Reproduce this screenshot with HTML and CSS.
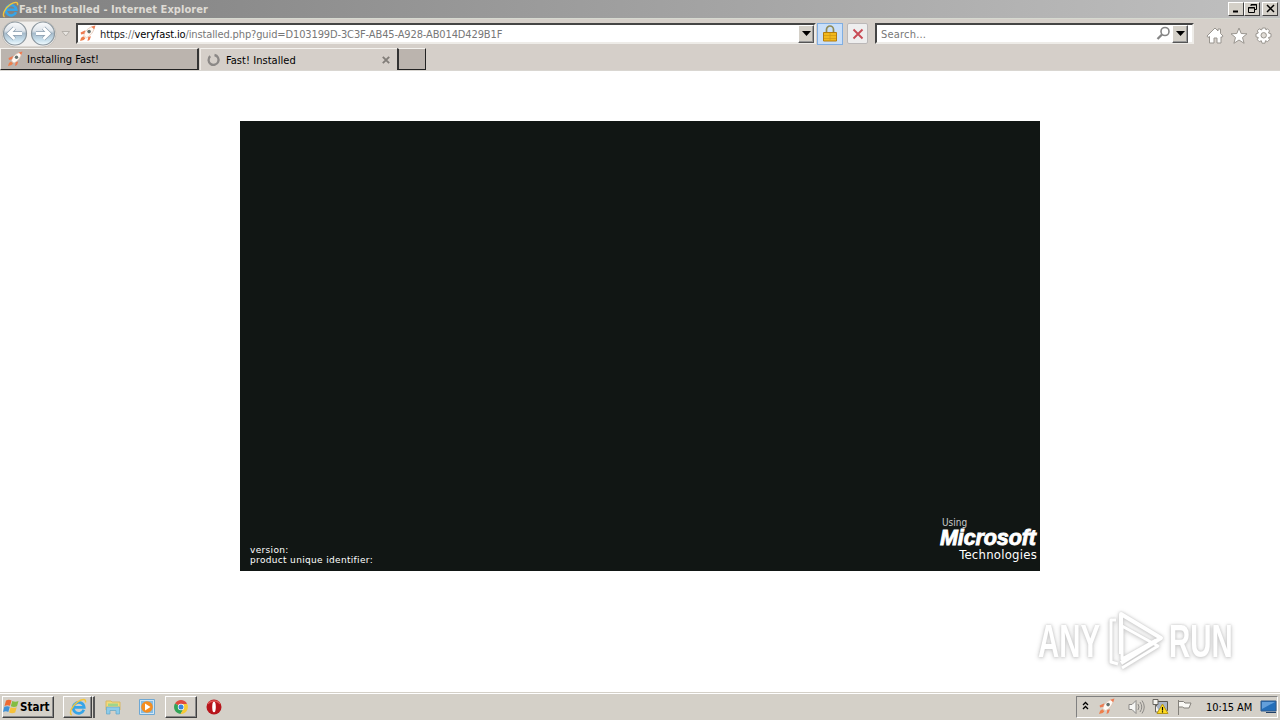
FILE: index.html
```html
<!DOCTYPE html>
<html lang="en">

<head>
    <meta charset="UTF-8">
    <title>Fast! Installed</title>
    <link rel="stylesheet" href="styles.css">
</head>

<body>
    <svg class="defs" width="0" height="0">
        <symbol id="ie" viewBox="0 0 16 16">
            <path d="M13.200 10.500A4.900 4.900 0 1 1 13.500 8.300H5" fill="none" stroke="#36a5e8" stroke-width="2.400" />
            <path d="M2.500 15C-.5 14 2.500 6.500 8 3.200C12 .7 15.500 .5 14.600 4" fill="none" stroke="#f2c53c" stroke-width="1.300" />
        </symbol>
        <symbol id="rocket" viewBox="0 0 16 16">
            <path d="M4.500 10C5 6 9 2 14.500 1C14.500 6 10.500 10.500 7 12z" fill="#fffaf5" stroke="#dfc0ad" stroke-width=".7" />
            <path d="M11.500 1.600L15.500 .5L14.300 4zM6 5L1.500 7L2 9L5 8.300zM8.700 11.300L8 15L10 14L11.300 10.500z" fill="#ee7a50" />
            <path d="M1 15L2 12L4 10.500L6 12.500L4.500 14z" fill="#ee7f4b" />
            <circle cx="9.500" cy="6.200" r="1.700" fill="#64706c" />
        </symbol>
    </svg>

    <div class="window">
        <div class="titlebar">
            <svg class="logo" width="17" height="17"><use href="#ie" /></svg>
            <span class="title">Fast! Installed - Internet Explorer</span>
            <div class="controls">
                <span class="win-btn"><svg width="13" height="11"><path d="M3 8.500h5" stroke="#000" stroke-width="2" /></svg></span>
                <span class="win-btn"><svg width="13" height="11" fill="none" stroke="#000"><path d="M5 3V1.500h5.500v5H9M5 2h6M2.500 4.500h6v5h-6zM2 5h7" /></svg></span>
                <span class="win-btn close"><svg width="13" height="11"><path d="M3 2l7 7M10 2l-7 7" stroke="#000" stroke-width="1.500" /></svg></span>
            </div>
        </div>

        <div class="toolbar">
            <svg class="nav" width="74" height="30" viewBox="0 0 74 30">
                <defs>
                    <linearGradient id="ball" x1="0" y1="0" x2="0" y2="1">
                        <stop offset="0" stop-color="#fafbfc" />
                        <stop offset=".38" stop-color="#dfe5eb" />
                        <stop offset=".5" stop-color="#a6bbcb" />
                        <stop offset=".78" stop-color="#c8dfec" />
                        <stop offset="1" stop-color="#f3fcff" />
                    </linearGradient>
                </defs>
                <path d="M15 2h28a13 13 0 0 1 0 26h-28a13 13 0 0 1 0-26" fill="#f1efed" stroke="#c4bfb8" />
                <circle cx="15" cy="14.500" r="11.500" fill="url(#ball)" stroke="#8c979f" stroke-width="1.200" />
                <circle cx="43" cy="14.500" r="11.500" fill="url(#ball)" stroke="#8c979f" stroke-width="1.200" />
                <path d="M14.500 9L9 14.500l5.500 5.500M10 14.500h12M43.500 9l5.500 5.500l-5.500 5.500M48 14.500H36" fill="none" stroke="#8ea0b1" stroke-width="4.300" />
                <path d="M14.500 9L9 14.500l5.500 5.500M10 14.500h12M43.500 9l5.500 5.500l-5.500 5.500M48 14.500H36" fill="none" stroke="#fff" stroke-width="3" />
                <path d="M62 12.500h7.500L65.800 17z" fill="#e8e5e1" stroke="#aaa59e" stroke-width=".8" />
            </svg>
            <div class="field address">
                <svg class="favicon" width="17" height="17"><use href="#rocket" /></svg>
                <span class="url"><span class="scheme">https</span>://<b>veryfast.io</b>/installed.php?guid=D103199D-3C3F-AB45-A928-AB014D429B1F</span>
                <span class="drop"><svg width="9" height="5"><path d="M0 0h9L4.500 5z" /></svg></span>
            </div>
            <span class="lock">
                <svg width="14" height="17" viewBox="0 0 14 17">
                    <path d="M3.500 8V4.500a3.500 3.500 0 0 1 7 0V8" fill="none" stroke="#8f8a55" stroke-width="1.700" />
                    <path d="M.5 7.500h13v8.500h-13z" fill="#f2b91d" stroke="#b47c0d" />
                    <path d="M1 10.500h12M1 13.500h12M7 8v8" stroke="#d29a18" stroke-width=".8" />
                </svg>
            </span>
            <span class="stop">
                <svg width="12" height="12"><path d="M1.500 1.500l9 9M10.500 1.500l-9 9" stroke="#c84b55" stroke-width="1.900" /></svg>
            </span>
            <div class="field search">
                <span class="hint">Search...</span>
                <svg class="glass" width="15" height="15"><circle cx="9" cy="5.500" r="4" fill="none" stroke="#858585" stroke-width="1.600" /><path d="M6 8.500L1.500 13" stroke="#858585" stroke-width="2.300" /></svg>
                <span class="drop"><svg width="9" height="5"><path d="M0 0h9L4.500 5z" /></svg></span>
            </div>
            <svg class="tools" width="72" height="20" viewBox="0 0 72 20" fill="#fff" stroke="#99958f">
                <path d="M1 10L9 2l3 3V3h2.500v4.500L17 10l-1 1.500l-1-.7V17h-4v-5H8v5H3.500v-6.500L2 11.500z" />
                <path d="M33 2l2.200 5.500l5.800.3l-4.500 3.700l1.600 5.800L33 14l-5.100 3.300l1.600-5.800L25 7.800l5.800-.3z" />
                <path d="M56.500 2h3l.5 2l1.500-1.200l2 2L62.500 7l2.500.8v3l-2.500.7l1 2.200l-2 2l-2-1l-.5 2.500h-3l-.7-2.500l-2 1l-2-2l1-2.200L50 10.800v-3l2.300-.8l-1-2.200l2-2L55.500 4z" />
                <circle cx="57.700" cy="9.300" r="2.700" fill="#e0dcd6" />
            </svg>
        </div>

        <div class="tabs">
            <div class="tab idle">
                <svg width="16" height="16"><use href="#rocket" /></svg>
                <span class="tab-one">Installing Fast!</span>
            </div>
            <div class="tab active">
                <svg class="spinner" width="14" height="14"><path d="M3.200 3.200A5 5 0 1 0 7.500 2" fill="none" stroke="#8b8886" stroke-width="2.300" /></svg>
                <span class="tab-two">Fast! Installed</span>
                <svg class="tab-close" width="8" height="8"><path d="M.8.8l6.400 6.400M7.200.8L.8 7.200" stroke="#827e79" stroke-width="1.900" /></svg>
            </div>
            <div class="tab new-tab"></div>
        </div>

        <div class="page">
            <div class="player">
                <div class="info">
                    <span class="version">version:</span>
                    <span class="identifier">product unique identifier:</span>
                </div>
                <div class="brand">
                    <span class="using">Using</span>
                    <span class="microsoft">Microsoft</span>
                    <span class="technologies">Technologies</span>
                </div>
            </div>
            <div class="watermark">
                <span class="any">ANY</span>
                <svg width="60" height="66" viewBox="0 0 60 66" fill="none" stroke="#fff" stroke-width="4" stroke-linejoin="round">
                    <path d="M17 46V6l40 24L17 55" />
                    <path d="M18 18l36 20L18 60M12 12H7v42l7 2M18 19v32l34-19" stroke-width="3" />
                </svg>
                <span class="run">RUN</span>
            </div>
        </div>

        <div class="taskbar">
            <div class="start">
                <svg width="17" height="17" viewBox="0 0 17 17">
                    <path d="M3 2.500q3-1.500 5.500 0L7 7.800Q4.500 6.500 1.500 8z" fill="#ee6a32" />
                    <path d="M9.300 3q3 1.500 6.200 0L14 8.300q-3 1.500-6.200 0z" fill="#83bd42" />
                    <path d="M1.300 8.800q3-1.300 5.500 0L5.300 14Q3 12.700 0 14z" fill="#3f91d7" />
                    <path d="M7.600 9.200q3 1.300 6.100 0L12.200 14.500q-3 1.500-6.100 0z" fill="#f6c13a" />
                </svg>
                <span>Start</span>
            </div>
            <div class="task ie-task"><svg width="18" height="18"><use href="#ie" /></svg></div>
            <div class="stack"></div>
            <svg class="launch explorer" width="16" height="16" viewBox="0 0 16 16">
                <path d="M1 2h5l1 1h8v8H1z" fill="#f3d978" stroke="#d7b864" />
                <path d="M3 4.500h10V7H3z" fill="#9ed58c" />
                <path d="M1.500 15V8h13v7H11v-3.500H5V15z" fill="#8dcbea" stroke="#62a8ca" stroke-width=".7" />
            </svg>
            <svg class="launch media" width="16" height="16" viewBox="0 0 16 16">
                <path d="M.5.5h15v15H.5z" fill="#cfe5f5" stroke="#6ea8d4" />
                <path d="M2 2h12v12H2z" fill="#83bce5" />
                <circle cx="8" cy="8" r="5.800" fill="#f48d20" />
                <path d="M6 4.500v7L11.500 8z" fill="#fff" />
            </svg>
            <div class="task chrome-task">
                <svg width="14" height="14" viewBox="0 0 14 14">
                    <path d="M7 7L1 3.500A7 7 0 0 1 13 3.500z" fill="#df4b3e" />
                    <path d="M7 7L1 3.500A7 7 0 0 0 6.500 14L10 8z" fill="#32a457" />
                    <path d="M7 4h6.200A7 7 0 0 1 6.500 14L10 8z" fill="#f7cb35" />
                    <circle cx="7" cy="7" r="3.200" fill="#fff" />
                    <circle cx="7" cy="7" r="2.500" fill="#3985db" />
                </svg>
            </div>
            <svg class="launch opera" width="16" height="16" viewBox="0 0 16 16">
                <circle cx="8" cy="8" r="7.500" fill="#b7151b" />
                <path d="M2 5a6.500 5 0 0 1 12 0" fill="none" stroke="#de5654" stroke-width="1.500" />
                <ellipse cx="8" cy="8" rx="1.800" ry="5.300" fill="#fff" />
            </svg>

            <div class="tray">
                <svg class="chevron" width="7" height="9" fill="none" stroke="#000" stroke-width="1.300"><path d="M1 4l2.500-2.500L6 4M1 8l2.500-2.500L6 8" /></svg>
                <svg class="tray-rocket" width="17" height="17"><use href="#rocket" /></svg>
                <svg class="sound" width="17" height="16" fill="none" stroke="#8b8986">
                    <path d="M1 5.500h3L8 1.500v13l-4-4H1z" fill="#f7f7f5" />
                    <path d="M10 5q2 3 0 6M12 3q3.500 5 0 10M14 1.500q4.500 6.500 0 13" />
                </svg>
                <svg class="network" width="17" height="17" viewBox="0 0 17 17">
                    <path d="M4.500 3.500h11v9h-11z" fill="#a9b4c4" stroke="#59554a" />
                    <path d="M1 1.500h5v5H1zM3.500 6.500V14h4" fill="#f5f4ef" stroke="#696660" />
                    <path d="M10.500 6L16 15.500H5z" fill="#ffdc20" stroke="#b89713" />
                    <path d="M10.500 9v3.500M10.500 13.300v1.200" stroke="#000" stroke-width="1.200" />
                </svg>
                <svg class="flag" width="17" height="16" fill="#faf9f5" stroke="#84817b"><path d="M2.500 1v15M2.500 2.500h5L9 4h6l-2 5H8L6.500 8h-4z" /></svg>
                <span class="clock">10:15 AM</span>
                <svg class="desktop" width="17" height="15"><path d="M1 2h15v10H1z" fill="#246eb9" stroke="#315b8c" /><path d="M2 3h13L2 10z" fill="#639fdb" /><path d="M6 13h10v1H6z" fill="#203f66" /></svg>
            </div>
        </div>
    </div>
</body>

</html>
```
FILE: styles.css
```css
* {
    padding: 0;
    margin: 0;
    box-sizing: border-box;
}

body {
    width: 1280px;
    height: 720px;
    overflow: hidden;
    background: #d4d0c8;
    font-family: "DejaVu Sans Condensed", "DejaVu Sans", sans-serif;
    font-stretch: condensed;
    font-size: 11px;
    color: #000;
}

svg {
    display: block;
    flex: none;
}

.defs {
    display: none;
}

span {
    white-space: nowrap;
}

.window {
    height: 720px;
    display: flex;
    flex-direction: column;
}

.titlebar {
    height: 18px;
    display: flex;
    align-items: center;
    padding: 0 2px;
    background: linear-gradient(90deg, #808080, #c0c0c0);
    color: #dedbd4;
}

.title {
    width: 192px;
    font-size: 11px;
    font-weight: bold;
    letter-spacing: .06px;
}

.controls {
    display: flex;
    margin-left: auto;
}

.win-btn {
    width: 16px;
    height: 14px;
    padding-left: 1px;
    background: #d4d0c8;
    border: 1px solid;
    border-color: #fff #404040 #404040 #fff;
}

.close {
    margin-left: 2px;
}

.toolbar {
    height: 30px;
    display: flex;
    align-items: center;
    background: #d5cfc9;
    border-top: 1px solid #d6d9d0;
}

.field {
    height: 21px;
    display: flex;
    align-items: center;
    background: #fff;
    border: 2px solid;
    border-color: #454545 #eeece8 #eeece8 #454545;
    color: #777;
}

.address {
    width: 740px;
    margin-left: 2px;
}

.favicon {
    margin: 0 4px 0 1px;
}

.url {
    padding-top: 1px;
    letter-spacing: -.125px;
}

.url b {
    font-weight: normal;
    color: #000;
}

.scheme {
    color: #222;
}

.drop {
    width: 16px;
    height: 18px;
    margin-left: auto;
    display: flex;
    align-items: center;
    justify-content: center;
    background: #d4d0c8;
    border: 1px solid;
    border-color: #fff #555 #555 #fff;
    box-shadow: inset -1px -1px #999;
}

.lock {
    width: 26px;
    height: 22px;
    margin-left: 1px;
    display: flex;
    align-items: center;
    justify-content: center;
    background: #c9dff9;
    border: 1px solid #80aee2;
}

.stop {
    width: 21px;
    height: 21px;
    margin-left: 4px;
    display: flex;
    align-items: center;
    justify-content: center;
    background: #eeeeee;
    border: 1px solid #bbb8b8;
    border-radius: 2px;
}

.search {
    width: 319px;
    margin-left: 7px;
    padding-right: 4px;
}

.hint {
    margin-left: 4px;
    padding-top: 1px;
    letter-spacing: .2px;
}

.glass {
    margin-left: auto;
}

.search .drop {
    margin-left: 1px;
}

.tools {
    margin: 4px 0 0 12px;
}

.tabs {
    height: 23px;
    display: flex;
    background: #d5cfc9;
    border-bottom: 1px solid #d9d6d1;
}

.tab {
    height: 22px;
    display: flex;
    align-items: center;
    border-top: 1px solid #f4f2ee;
}

.idle {
    width: 199px;
    padding-left: 6px;
    background: #bbb4ae;
    border-left: 1px solid #f4f2ee;
    border-right: 2px solid #333;
    border-bottom: 1px solid #222;
}

.tab-one {
    margin-left: 4px;
    padding-top: 1px;
}

.active {
    width: 197px;
    margin-left: 1px;
    padding: 0 7px 0 6px;
    border-left: 1px solid #eeeae5;
}

.tab-two {
    margin-left: 5px;
    padding-top: 1px;
    letter-spacing: .05px;
}

.tab-close {
    margin-left: auto;
}

.new-tab {
    width: 29px;
    background: #bbb4ae;
    border-left: 2px solid #333;
    border-right: 1px solid #222;
    border-bottom: 1px solid #222;
}

.page {
    position: relative;
    height: 621px;
    padding-top: 50px;
    background: #fff;
}

.player {
    width: 800px;
    height: 450px;
    margin: 0 auto;
    padding: 0 0 5px 10px;
    display: flex;
    justify-content: space-between;
    align-items: flex-end;
    background: #111614;
    color: #fff;
}

.info {
    display: flex;
    flex-direction: column;
    font-family: "DejaVu Sans", sans-serif;
    font-stretch: normal;
    font-size: 9px;
    line-height: 10px;
    letter-spacing: .33px;
    padding-bottom: 1px;
}

.brand {
    width: 100px;
    height: 49px;
    display: flex;
    flex-direction: column;
}

.using {
    margin-left: 2px;
    font-size: 10px;
    line-height: 11px;
    color: #c8cac9;
}

.microsoft {
    font: italic bold 21.5px/20px "Liberation Sans", Arial, sans-serif;
    letter-spacing: -.1px;
    -webkit-text-stroke: .9px #fff;
}

.technologies {
    align-self: flex-end;
    margin-right: 3px;
    font-size: 13px;
    line-height: 13px;
    letter-spacing: .24px;
}

/* overlay logo in the page corner */
.watermark {
    position: absolute;
    left: 1038px;
    top: 537px;
    display: flex;
    align-items: center;
    color: #fff;
    font: bold 46px/66px "Liberation Sans", Arial, sans-serif;
    filter: drop-shadow(0 0 1px #ccc) drop-shadow(0 1px 2px #ccc);
}

.any,
.run {
    width: 66px;
    transform: scaleX(.64);
    transform-origin: left center;
}

.watermark svg {
    margin-right: 5px;
}

.taskbar {
    height: 28px;
    display: flex;
    align-items: center;
    padding: 0 2px;
    background: #d4d0c8;
    border-top: 1px solid #d4d0c8;
    box-shadow: inset 0 1px #fff;
}

.start,
.task {
    height: 22px;
    display: flex;
    align-items: center;
    border: 1px solid;
    border-color: #fff #404040 #404040 #fff;
    box-shadow: inset -1px -1px #888;
}

.start {
    width: 52px;
    font-weight: bold;
    font-size: 11.5px;
}

.task {
    justify-content: center;
}

.ie-task {
    width: 29px;
    margin-left: 9px;
}

.stack {
    width: 3px;
    height: 22px;
    border-right: 2px solid #555;
    border-top: 1px solid #fff;
}

.explorer {
    margin-left: 10px;
}

.media {
    margin-left: 18px;
}

.chrome-task {
    width: 32px;
    margin-left: 10px;
}

.opera {
    margin-left: 9px;
}

.tray {
    width: 202px;
    height: 22px;
    margin-left: auto;
    display: flex;
    align-items: center;
    border: 1px solid;
    border-color: #808080 #fff #fff #808080;
}

.chevron {
    margin: -3px 0 0 5px;
}

.tray-rocket {
    margin-left: 9px;
}

.sound {
    margin-left: 13px;
}

.network {
    margin-left: 7px;
}

.flag {
    margin-left: 7px;
}

.clock {
    width: 46px;
    margin-left: 13px;
    padding-top: 1px;
    letter-spacing: -.1px;
}

.desktop {
    margin-left: auto;
}
```
